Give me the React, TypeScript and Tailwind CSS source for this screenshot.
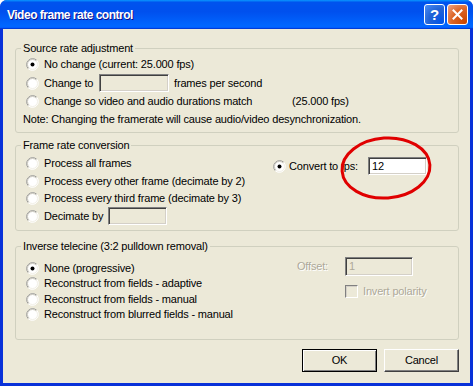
import React from "react";

const Radio = ({ checked = false }: { checked?: boolean }) => (
  <svg width="13" height="13" viewBox="0 0 13 13" className="shrink-0">
    <circle cx="6.5" cy="6.5" r="5.5" fill="#ffffff" />
    <path d="M2.26 10.74 A6 6 0 0 1 10.74 2.26" fill="none" stroke="#9a9a9a" strokeWidth="1" />
    <path d="M10.74 2.26 A6 6 0 0 1 2.26 10.74" fill="none" stroke="#ffffff" strokeWidth="1" />
    <path d="M2.96 10.04 A5 5 0 0 1 10.04 2.96" fill="none" stroke="#c9c7bd" strokeWidth="1" />
    <path d="M10.04 2.96 A5 5 0 0 1 2.96 10.04" fill="none" stroke="#f1efe6" strokeWidth="1" />
    {checked && <circle cx="6.5" cy="6.5" r="2" fill="#000000" />}
  </svg>
);

const Field = ({ value = "", w, h, disabled = false }: { value?: string; w: string; h: string; disabled?: boolean }) => (
  <div
    className={`${w} ${h} shrink-0 border border-t-[#808080] border-l-[#808080] border-r-white border-b-white shadow-[inset_1px_1px_0_#404040,inset_-1px_-1px_0_#d4d0c8] pl-[3px] flex items-center ${
      disabled ? "bg-[#ECE9D8] text-[#ACA899]" : "bg-white text-black"
    }`}
  >
    {value}
  </div>
);

const Row = ({ h, checked = false, children }: { h: string; checked?: boolean; children: React.ReactNode }) => (
  <div className={`${h} flex items-center whitespace-nowrap`}>
    <Radio checked={checked} />
    <div className="ml-[5px] flex items-center">{children}</div>
  </div>
);

const Group = ({ title, h, className = "", children }: { title: string; h: string; className?: string; children: React.ReactNode }) => (
  <fieldset className={`${h} ${className} border border-[#D0D0BF] rounded-[3px] p-0 m-0 min-w-0`}>
    <legend className="ml-[5px] px-[2px] leading-[13px] whitespace-nowrap">{title}</legend>
    {children}
  </fieldset>
);

const TitleBar = () => (
  <div className="h-[29px] shrink-0 flex items-center pl-[7px] pr-[5px] bg-[linear-gradient(to_bottom,#0997FF_0%,#0053EE_8%,#0050EE_40%,#0066FF_88%,#0066FF_93%,#005BFF_95%,#003DD7_96%,#003DD7_100%)]">
    <span className="flex-1 text-white font-bold text-[12px] tracking-[-0.5px] leading-[15px] [text-shadow:1px_1px_#0F1089] pt-[1px]">
      Video frame rate control
    </span>
    <div className="flex items-center gap-[2px]">
      <div className="w-[21px] h-[21px] rounded-[3px] border border-white bg-[radial-gradient(circle_at_90%_90%,#0054E9_0%,#2263D5_55%,#4C8EF7_100%)] flex items-center justify-center text-white font-bold text-[15px] leading-none">
        ?
      </div>
      <div className="w-[21px] h-[21px] rounded-[3px] border border-white bg-[radial-gradient(circle_at_90%_90%,#CC4600_0%,#DC6527_55%,#F0A584_100%)] flex items-center justify-center">
        <svg width="11" height="11" viewBox="0 0 11 11">
          <path d="M1.5 1.5 L9.5 9.5 M9.5 1.5 L1.5 9.5" stroke="#ffffff" strokeWidth="2" strokeLinecap="square" />
        </svg>
      </div>
    </div>
  </div>
);

const Button = ({ label, isDefault = false }: { label: string; isDefault?: boolean }) => (
  <div
    className={`w-[75px] h-[23px] flex items-center justify-center bg-[#ECE9D8] ${
      isDefault
        ? "border border-black shadow-[inset_1px_1px_0_#ffffff,inset_-1px_-1px_0_#808080]"
        : "border border-t-white border-l-white border-r-[#404040] border-b-[#404040] shadow-[inset_-1px_-1px_0_#808080]"
    }`}
  >
    {label}
  </div>
);

export default function App() {
  return (
    <div className="relative w-[473px] h-[386px] flex flex-col bg-[#0831D9] rounded-t-[7px] overflow-hidden font-['Liberation_Sans',Arial,sans-serif] text-[11px] tracking-[-0.17px] leading-[13px] text-black">
      <TitleBar />
      <div className="flex-1 mx-[3px] mb-[3px] bg-[#ECE9D8] flex flex-col pl-[12px] pr-[11px] pt-[13px]">
        <Group title="Source rate adjustment" h="h-[91px]">
          <div className="pl-[10px] flex flex-col">
            <Row h="h-[18px]" checked>
              No change (current: 25.000 fps)
            </Row>
            <Row h="h-[20px]">
              <span className="w-[55px]">Change to</span>
              <Field w="w-[70px]" h="h-[18px]" disabled />
              <span className="ml-[5px]">frames per second</span>
            </Row>
            <Row h="h-[17px]">
              <span className="w-[248px]">Change so video and audio durations match</span>
              <span>(25.000 fps)</span>
            </Row>
            <div className="h-[18px] flex items-center -ml-[3px] whitespace-nowrap">
              Note: Changing the framerate will cause audio/video desynchronization.
            </div>
          </div>
        </Group>

        <Group title="Frame rate conversion" h="h-[92px]" className="mt-[6px]">
          <div className="pl-[10px] flex">
            <div className="w-[247px] pt-[2px] flex flex-col">
              <Row h="h-[18px]">Process all frames</Row>
              <Row h="h-[18px]">Process every other frame (decimate by 2)</Row>
              <Row h="h-[17px]">Process every third frame (decimate by 3)</Row>
              <Row h="h-[18px]">
                <span className="w-[64px]">Decimate by</span>
                <Field w="w-[59px]" h="h-[18px]" disabled />
              </Row>
            </div>
            <div className="pt-[5px]">
              <div className="h-[18px] flex items-center whitespace-nowrap">
                <Radio checked />
                <span className="ml-[3px] w-[79px]">Convert to fps:</span>
                <Field value="12" w="w-[59px]" h="h-[18px]" />
              </div>
            </div>
          </div>
        </Group>

        <Group title="Inverse telecine (3:2 pulldown removal)" h="h-[100px]" className="mt-[9px]">
          <div className="pl-[10px] flex">
            <div className="w-[262px] pt-[7px] flex flex-col">
              <Row h="h-[16px]" checked>
                None (progressive)
              </Row>
              <Row h="h-[15px]">Reconstruct from fields - adaptive</Row>
              <Row h="h-[16px]">Reconstruct from fields - manual</Row>
              <Row h="h-[15px]">Reconstruct from blurred fields - manual</Row>
            </div>
            <div className="pt-[4px] flex flex-col whitespace-nowrap">
              <div className="h-[19px] flex items-center">
                <span className="w-[40px] text-right text-[#ACA899] [text-shadow:1px_1px_#ffffff]">Offset:</span>
                <div className="ml-[17px]">
                  <Field value="1" w="w-[68px]" h="h-[19px]" disabled />
                </div>
              </div>
              <div className="mt-[9px] h-[13px] pl-[57px] flex items-center">
                <div className="w-[13px] h-[13px] border border-t-[#808080] border-l-[#808080] border-r-white border-b-white shadow-[inset_1px_1px_0_#d4d0c8] bg-[#ECE9D8]" />
                <span className="ml-[5px] text-[#ACA899] [text-shadow:1px_1px_#ffffff]">Invert polarity</span>
              </div>
            </div>
          </div>
        </Group>

        <div className="mt-[9px] flex justify-end gap-[7px]">
          <Button label="OK" isDefault />
          <Button label="Cancel" />
        </div>
      </div>

      <svg className="absolute left-[338px] top-[134px] pointer-events-none" width="96" height="68" viewBox="0 0 96 68">
        <ellipse cx="48" cy="34" rx="44" ry="30" fill="none" stroke="#E00000" strokeWidth="3" transform="rotate(-4 48 34)" />
      </svg>
    </div>
  );
}
